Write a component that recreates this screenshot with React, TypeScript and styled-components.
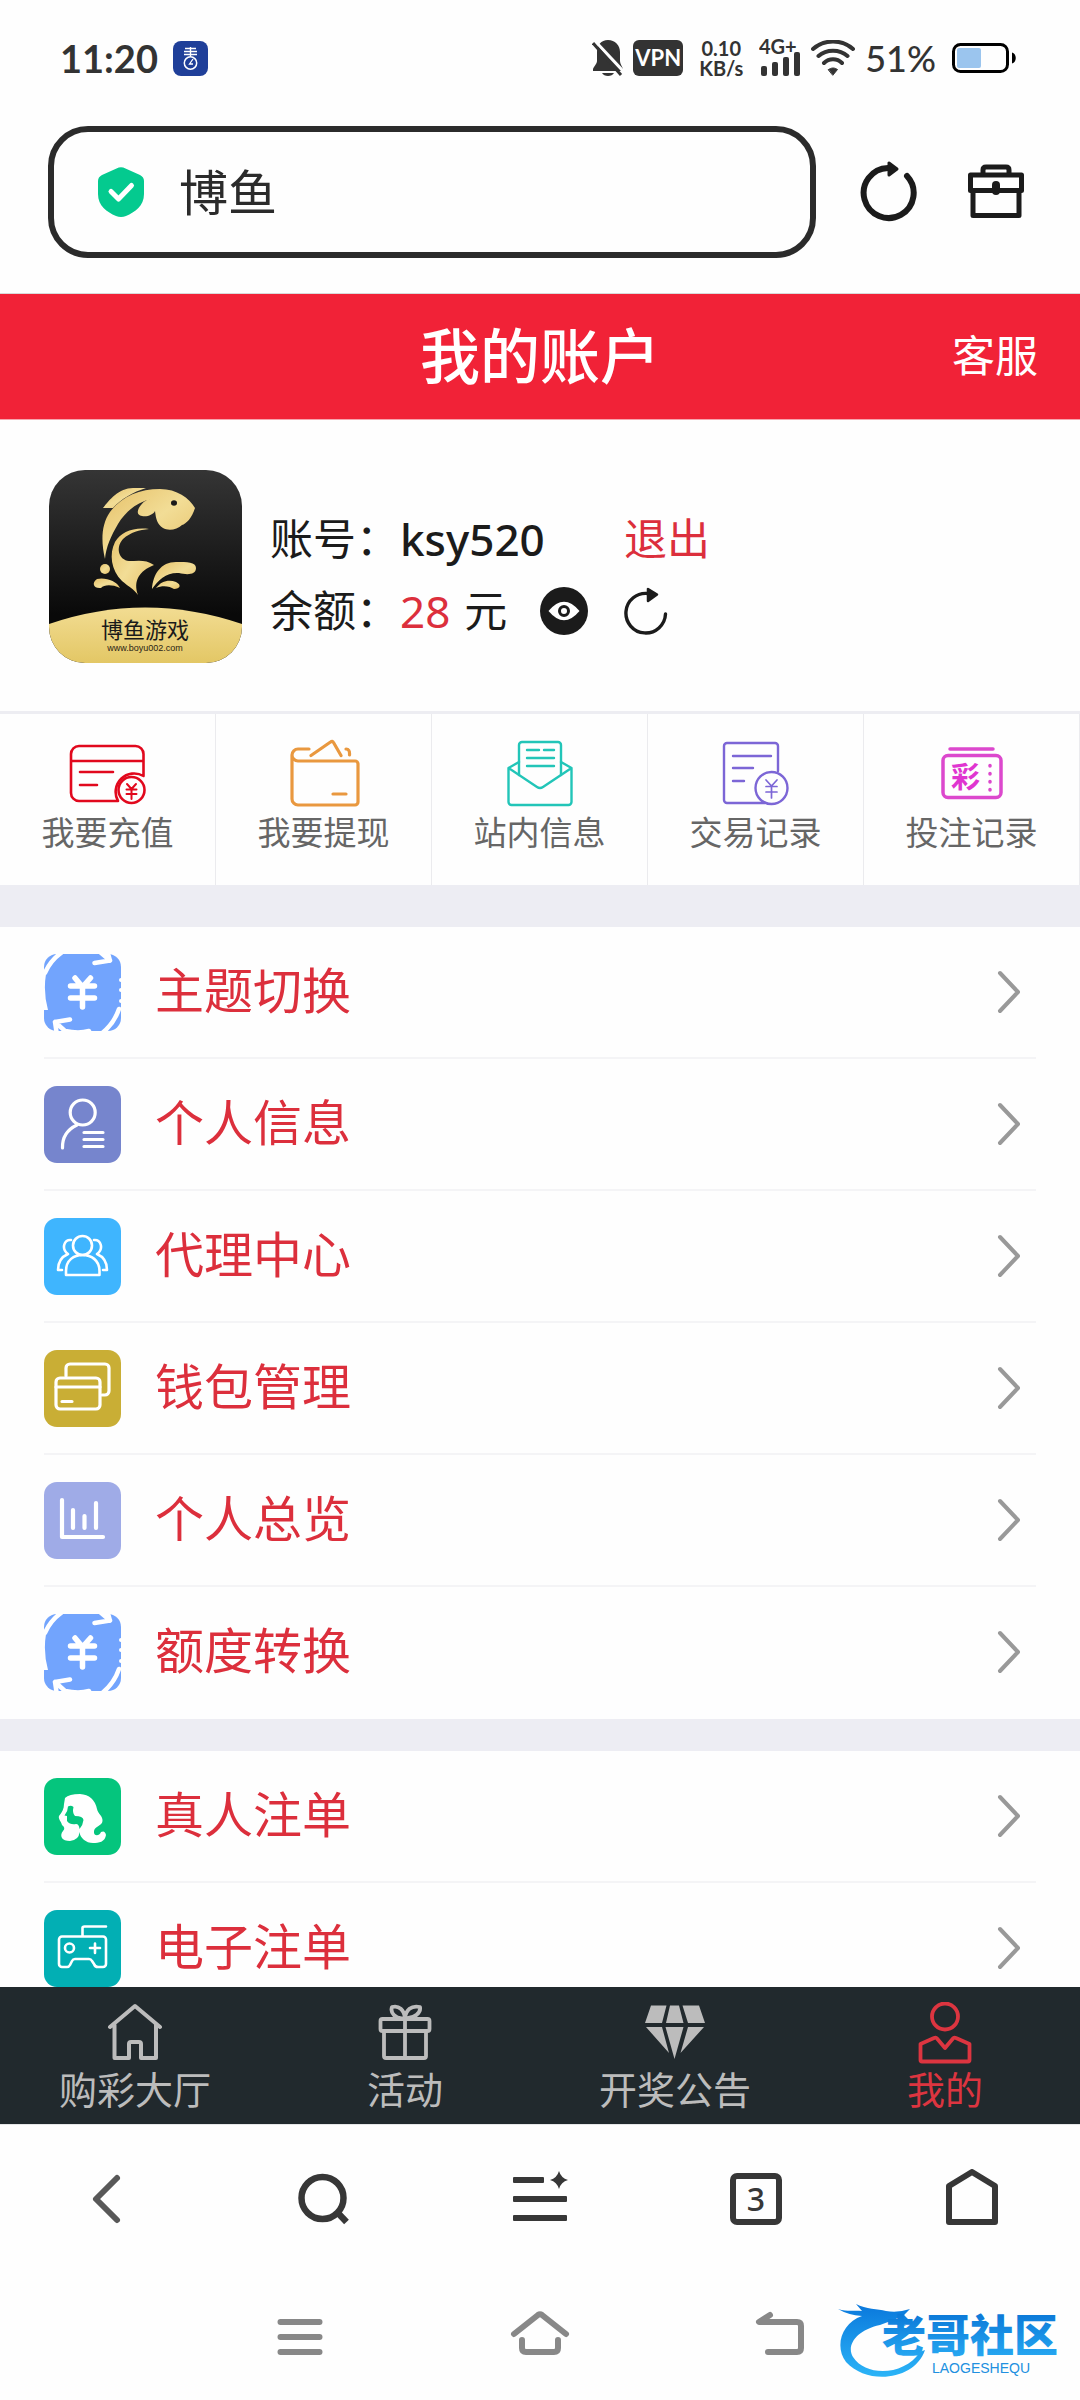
import React from "react";
import styled, { createGlobalStyle } from "styled-components";

const sans = `"Noto Sans", "Noto Sans CJK SC", sans-serif`;
const status = `Lato, "Noto Sans", sans-serif`;
const red = "#dc2f3c";
const ink = "#1b1b1b";

const GlobalStyle = createGlobalStyle`
  *, *::before, *::after { box-sizing: border-box; }
  body { margin: 0; background: #fefefe; font-family: ${sans}; color: ${ink}; }
  button, input { font: inherit; color: inherit; background: none; border: 0; padding: 0; margin: 0; }
  button { cursor: pointer; }
  a { color: inherit; text-decoration: none; }
  ul { list-style: none; margin: 0; padding: 0; }
  h1 { margin: 0; }
  svg { display: block; flex: none; }
`;

const Screen = styled.div`
  display: flex;
  flex-direction: column;
  height: 100vh;
  overflow: hidden;
  background: #fefefe;
`;

/* ---------- status bar ---------- */

const StatusBar = styled.header`
  display: flex;
  align-items: center;
  justify-content: space-between;
  height: 116px;
  padding: 0 64px 0 60px;
  color: #333;
  font-family: ${status};
`;

const StatusGroup = styled.div<{ $gap: number }>`
  display: flex;
  align-items: center;
  gap: ${(p) => p.$gap}px;
`;

const Clock = styled.time`
  font-size: 38px;
  line-height: 48px;
  font-weight: 700;
`;

const VpnTag = styled.span`
  width: 50px;
  height: 36px;
  border-radius: 6px;
  background: #333;
  color: #fff;
  font-size: 22px;
  line-height: 36px;
  font-weight: 700;
  text-align: center;
`;

const Speed = styled.span`
  display: flex;
  flex-direction: column;
  width: 44px;
  font-size: 20px;
  line-height: 20px;
  font-weight: 700;
  text-align: center;
`;

const Percent = styled.span`
  font-size: 36px;
  line-height: 48px;
  font-weight: 500;
`;

/* ---------- browser address row ---------- */

const AddressRow = styled.div`
  display: flex;
  align-items: center;
  gap: 42px;
  padding: 10px 54px 35px 48px;
  border-bottom: 1px solid #d9d9d9;
`;

const AddressBox = styled.label`
  display: flex;
  flex: 1;
  min-width: 0;
  align-items: center;
  gap: 35px;
  height: 132px;
  padding: 0 44px;
  border: 6px solid #2b2b2b;
  border-radius: 40px;
`;

const AddressInput = styled.input`
  flex: 1;
  min-width: 0;
  font-size: 49px;
  line-height: 64px;
  color: #2b2b2b;
  outline: none;
`;

const AddressActions = styled.div`
  display: flex;
  gap: 48px;
`;

const IconButton = styled.button`
  display: flex;
  align-items: center;
  justify-content: center;
`;

/* ---------- page ---------- */

const TitleBar = styled.div`
  display: grid;
  grid-template-columns: 1fr auto 1fr;
  align-items: center;
  flex: none;
  height: 126px;
  padding: 0 42px 2px;
  background: #f12237;
  border-bottom: 1px solid #f6a5ad;
  color: #fff;
`;

const Title = styled.h1`
  grid-column: 2;
  font-size: 60px;
  line-height: 80px;
  font-weight: 500;
`;

const ServiceLink = styled.a`
  justify-self: end;
  font-size: 43px;
  line-height: 60px;
`;

const Content = styled.main`
  flex: 1;
  min-height: 0;
  overflow: hidden;
`;

const Profile = styled.section`
  display: flex;
  align-items: flex-end;
  gap: 28px;
  padding: 50px 49px 48px;
`;

const Account = styled.div`
  display: grid;
  grid-template-columns: 130px 140px 84px auto;
  grid-auto-rows: 72px;
  align-items: center;
  padding-bottom: 16px;
  font-size: 43px;
  line-height: 60px;
`;

const UserName = styled.span`
  grid-column: span 2;
  font-size: 44px;
  font-weight: 500;
`;

const Balance = styled.span`
  display: flex;
  gap: 14px;
`;

const Amount = styled.span`
  font-size: 44px;
  color: ${red};
`;

const LogoutButton = styled.button`
  color: ${red};
  text-align: left;
`;

const QuickGrid = styled.nav`
  display: grid;
  grid-template-columns: repeat(5, 1fr);
  border-top: 3px solid #ededf2;
`;

const QuickLink = styled.a`
  display: flex;
  flex-direction: column;
  align-items: center;
  height: 171px;
  padding-top: 24px;
  border-right: 1px solid #ebebee;
  font-size: 33px;
  line-height: 46px;
  color: #666;
`;

const Spacer = styled.div<{ $size: number }>`
  height: ${(p) => p.$size}px;
  background: #ededf3;
`;

const Menu = styled.ul`
  padding: 0 44px;
`;

const MenuItem = styled.li`
  height: 132px;
  border-bottom: 2px solid #f4f4f6;

  &:last-child {
    border-bottom-color: transparent;
  }
`;

const MenuLink = styled.a`
  display: flex;
  align-items: center;
  gap: 34px;
  height: 100%;
  padding-right: 15px;
`;

const MenuLabel = styled.span`
  flex: 1;
  padding-bottom: 4px;
  font-size: 49px;
  line-height: 64px;
  color: ${red};
`;

const TabBar = styled.nav`
  display: grid;
  grid-template-columns: repeat(4, 1fr);
  flex: none;
  height: 137px;
  background: #21292d;
`;

const Tab = styled.a<{ $active?: boolean }>`
  display: flex;
  flex-direction: column;
  align-items: center;
  padding-top: 15px;
  font-size: 38px;
  line-height: 46px;
  color: ${(p) => (p.$active ? "#dc3540" : "#bcbcbc")};
`;

/* ---------- browser and system bars ---------- */

const BrowserBar = styled.nav`
  display: grid;
  grid-template-columns: repeat(5, 1fr);
  flex: none;
  height: 149px;
  border-top: 1px solid #e4e6e7;
  color: #373737;
`;

const TabCount = styled.span`
  width: 52px;
  height: 52px;
  border: 6px solid #373737;
  border-radius: 7px;
  font-size: 32px;
  line-height: 40px;
  font-weight: 500;
  text-align: center;
`;

const SystemBar = styled.footer`
  position: relative;
  display: grid;
  grid-template-columns: repeat(3, 240px);
  justify-content: center;
  flex: none;
  height: 127px;
  color: #888;
`;

const Watermark = styled.div`
  position: absolute;
  right: 16px;
  bottom: 22px;
  display: flex;
`;

/* ---------- icons ---------- */

type Kids = { children: React.ReactNode };

const Line = ({ w, h, sw, children }: Kids & { w: number; h: number; sw: number }) => (
  <svg width={w} height={h} viewBox={`0 0 ${w} ${h}`} fill="none" stroke="currentColor" strokeWidth={sw} strokeLinecap="round" strokeLinejoin="round" aria-hidden="true">
    {children}
  </svg>
);

const QuickSvg = ({ color, sw, children }: Kids & { color: string; sw: number }) => (
  <svg width="80" height="72" viewBox="0 0 80 72" fill="none" stroke={color} strokeWidth={sw} strokeLinecap="round" strokeLinejoin="round" aria-hidden="true">
    {children}
  </svg>
);

const Tile = ({ bg, sw, children }: Kids & { bg: string; sw: number }) => (
  <svg width="77" height="77" viewBox="0 0 77 77" fill="none" stroke="#fff" strokeWidth={sw} strokeLinecap="round" strokeLinejoin="round" aria-hidden="true">
    <rect width="77" height="77" rx="13" fill={bg} stroke="none" />
    {children}
  </svg>
);

const AppBadge = () => (
  <svg width="35" height="35" viewBox="0 0 35 35" fill="none" stroke="#fff" aria-hidden="true">
    <rect width="35" height="35" rx="8" fill="#1f3f99" stroke="none" />
    <path d="M12 7.500h11M11 10.500h13M11 13.500h13M17.500 6v9" strokeWidth="1.400" />
    <circle cx="17.500" cy="22" r="6.200" strokeWidth="1.500" />
    <path d="M20 18l-3.500 5h3.500" strokeWidth="1.300" />
  </svg>
);

const BellOff = () => (
  <svg width="32" height="36" viewBox="0 0 32 36" aria-hidden="true">
    <path d="M16 0C9 0 5 5 5 12v9c0 3-3 5-4 8v2h30v-2c-1-3-3-5-3-8v-9C28 5 23 0 16 0Z" fill="#333" />
    <path d="M10 33h12c-2 4-10 4-12 0Z" fill="#333" />
    <path d="M3 1 31 31" stroke="#fefefe" strokeWidth="3" />
    <path d="M1 3 29 35" stroke="#333" strokeWidth="3" />
    <path d="M0 7V18L5 12Z" fill="#fefefe" />
  </svg>
);

const Signal = () => (
  <svg width="42" height="52" viewBox="0 -8 42 52" fill="#333" aria-hidden="true">
    <text x="0" y="14" fontFamily="Lato" fontWeight="700" fontSize="20">4G+</text>
    <rect x="2" y="26" width="6" height="10" rx="2" />
    <rect x="13" y="22" width="6" height="14" rx="2" />
    <rect x="24" y="17" width="6" height="19" rx="2" />
    <rect x="35" y="12" width="6" height="24" rx="2" />
  </svg>
);

const Wifi = () => (
  <svg width="44" height="36" viewBox="0 0 44 36" fill="none" stroke="#333" strokeWidth="4" strokeLinecap="round" aria-hidden="true">
    <path d="M2 9C13-1 31-1 42 9M7.500 16c8-7 21-7 29 0M13 23c5-5 13-5 18 0" />
    <path d="M17.500 29.500c3-2 6-2 9 0L22 35Z" fill="#333" strokeWidth="1" strokeLinejoin="round" />
  </svg>
);

const Battery = () => (
  <svg width="64" height="30" viewBox="0 0 64 30" aria-hidden="true">
    <rect x="1.500" y="1.500" width="54" height="27" rx="7" fill="none" stroke="#000" strokeWidth="3" />
    <rect x="5" y="5" width="24" height="20" rx="2" fill="#9bc5ee" />
    <path d="M60 9.500c5 1 5 10 0 11Z" fill="#000" />
  </svg>
);

const Shield = () => (
  <svg width="46" height="50" viewBox="0 0 46 50" aria-hidden="true">
    <path d="M18.500 1.500q4.500-2.500 9 0L42 8q4 2 4 6v13c0 12-9 18-18 22q-5 2-10 0C9 45 0 39 0 27V14q0-4 4-6Z" fill="#04ca8f" />
    <path d="M13 24.500 20.500 32 33.500 18.500" fill="none" stroke="#fff" strokeWidth="5" strokeLinecap="round" strokeLinejoin="round" />
  </svg>
);

const Reload = () => (
  <svg width="60" height="64" viewBox="0 2 60 64" fill="none" stroke="#1b1b1b" strokeWidth="6" strokeLinecap="round" aria-hidden="true">
    <path d="M49 18A25 25 0 1 1 30 10" />
    <path d="M31 5v12l8-6Z" fill="#1b1b1b" strokeWidth="3" strokeLinejoin="round" />
  </svg>
);

const Briefcase = () => (
  <Line w={60} h={64} sw={5}>
    <path d="M17 13v-3q0-3 3-3h20q3 0 3 3v3" />
    <path d="M4.500 15h51v15.500h-51ZM7 31v24.500h46V31" />
    <path d="M30 25v6" strokeWidth="8" />
  </Line>
);

const Logo = () => (
  <svg width="193" height="193" viewBox="0 0 193 193" role="img" aria-label="博鱼游戏">
    <defs>
      <linearGradient id="night" x1="0" y1="0" x2="0" y2="1">
        <stop offset="0" stopColor="#353535" />
        <stop offset="0.750" stopColor="#090909" />
      </linearGradient>
      <linearGradient id="gold" x1="0" y1="0" x2="1" y2="1">
        <stop offset="0" stopColor="#e6c068" />
        <stop offset="0.500" stopColor="#f2dd96" />
        <stop offset="1" stopColor="#e6c068" />
      </linearGradient>
      <linearGradient id="sand" x1="0" y1="0" x2="0" y2="1">
        <stop offset="0" stopColor="#f2dc92" />
        <stop offset="1" stopColor="#e3c765" />
      </linearGradient>
      <clipPath id="tile"><rect width="193" height="193" rx="36" /></clipPath>
    </defs>
    <g clipPath="url(#tile)">
      <rect width="193" height="193" fill="url(#night)" />
      <path d="M0 154Q96 121 193 154V193H0Z" fill="url(#sand)" />
      <g fill="url(#gold)">
        <path d="M54 38C60 30 70 18 84 18H97C84 22 72 29 64 38Z" />
        <path d="M56 89C52 72 52 55 61 42C72 27 90 19 111 19C128 19 140 28 146 38C143 48 137 54 133 55C128 60 119 61 114 58C108 54 107 49 106 41C104 45 98 47 93 46C87 45 88 40 92 35C95 31 98 30 102 29C88 32 76 42 69 54C62 66 57 77 56 89Z" />
        <path d="M100 59C84 57 72 62 66 72C60 84 62 100 73 111C80 117 85 119 89 125C84 111 90 101 105 95C97 89 88 91 80 91C70 90 66 78 74 69C82 62 90 60 100 59Z" />
        <path d="M103 119C104 104 112 92 127 92C138 92 147 92 147 98C147 105 138 105 130 103C118 102 109 110 103 119Z" />
        <path d="M107 118C112 111 120 109 127 112C133 115 131 119 125 119C121 116 113 115 107 118Z" />
        <path d="M71 118C68 111 56 107 48 109C42 113 45 119 52 118C55 115 62 114 71 118Z" />
        <circle cx="56" cy="99" r="5" />
      </g>
      <ellipse cx="125" cy="33" rx="3" ry="2.800" fill="#1a1a1a" />
      <text x="96" y="168" textAnchor="middle" fontFamily="Noto Sans CJK SC" fontSize="22" fill="#1a1a1a">博鱼游戏</text>
      <text x="96" y="181" textAnchor="middle" fontFamily="Liberation Sans" fontSize="9" fill="#2a2415">www.boyu002.com</text>
    </g>
  </svg>
);

const Eye = () => (
  <svg width="48" height="48" viewBox="0 0 48 48" aria-hidden="true">
    <circle cx="24" cy="24" r="24" fill="#1b1b1b" />
    <path d="M8.500 24Q24 5.500 39.500 24Q24 42.500 8.500 24Z" fill="#fff" />
    <circle cx="24" cy="24" r="4.500" fill="none" stroke="#1b1b1b" strokeWidth="3" />
  </svg>
);

const SmallReload = () => (
  <svg width="44" height="48" viewBox="0 0 44 48" fill="none" stroke="#1b1b1b" strokeWidth="3.400" strokeLinecap="round" strokeLinejoin="round" aria-hidden="true">
    <path d="M41.500 27A19.800 19.800 0 1 1 24 6.500" />
    <path d="M24 2v12l9-6.500Z" fill="#1b1b1b" strokeWidth="2.500" />
  </svg>
);

const DepositIcon = () => (
  <QuickSvg color="#e1081d" sw={2.6}>
    <path d="M75.500 38V16a8 8 0 0 0-8-8H11a8 8 0 0 0-8 8v39a8 8 0 0 0 8 8h39A18.500 18.500 0 0 1 75.500 38ZM3 23h72.500" />
    <path d="M12 34h33M12 47h17" />
    <circle cx="63.500" cy="52" r="13" />
    <path d="M59 46l4.500 5 4.500-5M63.500 51v10M58.500 51.500h10M58.500 56h10" strokeWidth="2" />
  </QuickSvg>
);

const WithdrawIcon = () => (
  <QuickSvg color="#e9983f" sw={3.2}>
    <path d="M25 11H14a6 6 0 0 0 0 12h57a3 3 0 0 1 3 3v38a3 3 0 0 1-3 3H14a6 6 0 0 1-6-6V17" />
    <path d="M27 17.500 46.500 4q2-1.500 3 .500l7.500 13M62 11q4 0 3.500 6M49 56h13" />
  </QuickSvg>
);

const InboxIcon = () => (
  <QuickSvg color="#22c5b8" sw={2.4}>
    <path d="M19 37V7a3 3 0 0 1 3-3h36a3 3 0 0 1 3 3v30" />
    <path d="M19 24 8.500 30v34a3 3 0 0 0 3 3h57a3 3 0 0 0 3-3V30L61 24M8.500 30 37 49q3 2 6 0L71.500 30" />
    <path d="M27 12h12M44 12h10M27 20h27M27 28h27" />
  </QuickSvg>
);

const RecordIcon = () => (
  <QuickSvg color="#7c66d6" sw={2.4}>
    <path d="M62 33V8a3 3 0 0 0-3-3H11a3 3 0 0 0-3 3v54a3 3 0 0 0 3 3h38M17 18h38M17 30h20M17 43h11" />
    <circle cx="55.500" cy="50" r="16" />
    <path d="M50 42l5.500 6 5.500-6M55.500 48v12M50 48.500h11M50 54h11" strokeWidth="1.700" />
  </QuickSvg>
);

const BetIcon = () => (
  <QuickSvg color="#dc48cd" sw={3.5}>
    <path d="M18 11h43" />
    <rect x="11" y="17.500" width="58" height="42" rx="5" />
    <path d="M58 27.500v.500M58 35.500v.500M58 43.500v.500M58 51.500v.500" />
    <text x="33.500" y="50" textAnchor="middle" fontFamily="Noto Sans CJK SC" fontWeight="700" fontSize="29" fill="#e035d0" stroke="none">彩</text>
  </QuickSvg>
);

const SwitchTile = () => (
  <Tile bg="#72a4fd" sw={5}>
    <path d="M1 19Q6 7 17-1M75 55Q70 70 57 80" strokeWidth="4.500" />
    <path d="M50.500 9 66 6.500 63-4M56-2l10 8.500M26 65.500 11 68l2 13M11 68l10 9q14 3 24 0" strokeWidth="4.500" />
    <path d="M0 20H2Q-1 38 4 56H0Z" fill="#fff" stroke="none" />
    <path d="M77 26v.100M77 36v.100M77 47v.100" strokeWidth="4" />
    <path d="M31 24l7.500 9L46.500 24M38.500 33v20M26.500 32h24M26.500 44h24" strokeWidth="5.500" />
  </Tile>
);

const PersonTile = () => (
  <Tile bg="#7685cd" sw={3.2}>
    <circle cx="38.700" cy="26.500" r="12.500" />
    <path d="M33 39Q18 46 18.500 62M40 46.500h19M40 53.500h19M40 60.500h19" />
  </Tile>
);

const AgentTile = () => (
  <Tile bg="#3fb5fe" sw={2.6}>
    <circle cx="38.500" cy="27.500" r="9.500" />
    <path d="M22 57v-4c0-11 8-16 16.500-16S55.500 42 55.500 53v4ZM27 22c-7-1-10 9-3 14-7 3-10 8-10 16h4M50 22c7-1 10 9 3 14 7 3 10 8 10 16h-4" />
  </Tile>
);

const CardsTile = () => (
  <Tile bg="#c9ae35" sw={3.2}>
    <path d="M22 26V18a4 4 0 0 1 4-4h35a4 4 0 0 1 4 4v23a4 4 0 0 1-4 4h-3" />
    <rect x="12" y="28" width="44" height="31" rx="4" />
    <path d="M12 37h44M18 51.500h10" />
  </Tile>
);

const ChartTile = () => (
  <Tile bg="#9fabe7" sw={4.2}>
    <path d="M18 18v37h41M29 28v18M40.500 34v12M52 21v25" />
  </Tile>
);

const LadyTile = () => (
  <Tile bg="#05c57d" sw={2}>
    <path stroke="none" fill="#fff" d="M21 20Q25 16 36 16Q50 17 53 31C54 36 59 38 58.500 43C58 48 51 48 50 53C49 58 55 59 57 54Q61 52 62 57C61 64 55 65 49 65C42 65 36 60 35.500 54Q35 62 26 63C18 63 15 58 19 53Q22 50 18 47C17 43 14 41 15 38C18 34 20 31 20 26Z" />
    <path stroke="none" fill="#05c57d" d="M24 28.500Q27 27 29.500 29Q28 35 31 38Q39 38 39.500 42Q39 47 35.500 51Q35 46 32 46Q26 47 23 43V38L20.500 37.500Q24 33 24 28.500Z" />
  </Tile>
);

const GameTile = () => (
  <Tile bg="#02afb4" sw={2.6}>
    <path d="M38.500 26v-8q0-1.500 2-1.500H62M18 26.500h41a3 3 0 0 1 3 3V54a3 3 0 0 1-3 3h-5q-3 0-4-3l-2-3q-1-2-3-2H31q-2 0-3 2l-2 4q-1 2-3 2h-5a3 3 0 0 1-3-3V29.500a3 3 0 0 1 3-3Z" />
    <circle cx="25.500" cy="38" r="4.500" />
    <path d="M51 33.500v9.500M46 38h10" />
  </Tile>
);

const Chevron = () => (
  <svg width="24" height="44" viewBox="0 0 24 44" fill="none" stroke="#999" strokeWidth="4" strokeLinecap="round" strokeLinejoin="round" aria-hidden="true">
    <path d="M3 3 21 22 3 41" />
  </svg>
);

const HallIcon = () => (
  <Line w={60} h={64} sw={4}>
    <path d="M5 25 30 4 55 25M9.500 23v33H24V42q0-2 2-2h8q2 0 2 2v14h15V23" />
  </Line>
);

const GiftIcon = () => (
  <Line w={60} h={64} sw={3.8}>
    <rect x="5.500" y="17" width="49" height="12" rx="2" />
    <path d="M9 29v25q0 2 2 2h38q2 0 2-2V29M30 17v39M30 16C20 18 15 10 17 5C24 3 29 8 30 16C31 8 36 3 45 5C46 10 40 17 30 16" />
  </Line>
);

const DiamondIcon = () => (
  <svg width="60" height="64" viewBox="0 0 60 64" fill="currentColor" aria-hidden="true">
    <path d="M6 3.500h15.500L17 21H0ZM25 3.500h9L38.500 21H21ZM37.500 3.500H54L60 21H43ZM1 25h16l7 26ZM20.500 25h18L29.500 57ZM43 25h16L35.500 51Z" />
  </svg>
);

const MineIcon = () => (
  <Line w={60} h={64} sw={3.8}>
    <circle cx="30" cy="14.500" r="13" />
    <path d="M5.500 58V42L19 36q2-1 3 .500L30 46l8-9.500q1-1.500 3-.500l13.500 6v16q0 1.500-1.500 1.500H7q-1.500 0-1.500-1.500Z" />
  </Line>
);

const Dragon = () => (
  <svg width="226" height="76" viewBox="0 0 226 76" role="img" aria-label="老哥社区 LAOGESHEQU">
    <defs>
      <linearGradient id="sea" x1="0" y1="0" x2="0" y2="1">
        <stop offset="0" stopColor="#0a78dc" />
        <stop offset="1" stopColor="#2bb4f7" />
      </linearGradient>
      <linearGradient id="seaText" x1="0" y1="0" x2="0" y2="1">
        <stop offset="0.200" stopColor="#0c79d8" />
        <stop offset="1" stopColor="#2bb0f6" />
      </linearGradient>
    </defs>
    <path fill="url(#sea)" d="M0 7C10 10 16 8 24 9L18 2C28 7 40 7 48 9Q60 11 72 7L66 13L71 18L58 16L68 24L50 20L42 23C18 28 8 44 15 55C28 75 66 74 82 50L87 48C77 78 30 84 8 60C-4 44 4 21 24 14Q10 13 0 7Z" />
    <text x="44" y="50" fontFamily="Noto Sans CJK SC" fontWeight="900" fontSize="44" fill="url(#seaText)">老哥社区</text>
    <text x="94" y="71" fontFamily="Liberation Sans" fontSize="14" fill="#2190e0">LAOGESHEQU</text>
  </svg>
);

/* ---------- data ---------- */

const quickLinks = [
  { label: "我要充值", icon: <DepositIcon /> },
  { label: "我要提现", icon: <WithdrawIcon /> },
  { label: "站内信息", icon: <InboxIcon /> },
  { label: "交易记录", icon: <RecordIcon /> },
  { label: "投注记录", icon: <BetIcon /> },
];

const accountMenu = [
  { label: "主题切换", icon: <SwitchTile /> },
  { label: "个人信息", icon: <PersonTile /> },
  { label: "代理中心", icon: <AgentTile /> },
  { label: "钱包管理", icon: <CardsTile /> },
  { label: "个人总览", icon: <ChartTile /> },
  { label: "额度转换", icon: <SwitchTile /> },
];

const betMenu = [
  { label: "真人注单", icon: <LadyTile /> },
  { label: "电子注单", icon: <GameTile /> },
];

const tabs = [
  { label: "购彩大厅", icon: <HallIcon /> },
  { label: "活动", icon: <GiftIcon /> },
  { label: "开奖公告", icon: <DiamondIcon /> },
  { label: "我的", icon: <MineIcon />, active: true },
];

const MenuList = ({ items }: { items: { label: string; icon: React.ReactNode }[] }) => (
  <Menu>
    {items.map((item) => (
      <MenuItem key={item.label}>
        <MenuLink href="#">
          {item.icon}
          <MenuLabel>{item.label}</MenuLabel>
          <Chevron />
        </MenuLink>
      </MenuItem>
    ))}
  </Menu>
);

export default function App() {
  return (
    <Screen>
      <GlobalStyle />
      <StatusBar>
        <StatusGroup $gap={15}>
          <Clock>11:20</Clock>
          <AppBadge />
        </StatusGroup>
        <StatusGroup $gap={16}>
          <StatusGroup $gap={9}>
            <BellOff />
            <VpnTag>VPN</VpnTag>
          </StatusGroup>
          <Speed>
            <span>0.10</span>
            <span>KB/s</span>
          </Speed>
          <StatusGroup $gap={10}>
            <Signal />
            <Wifi />
            <Percent>51%</Percent>
          </StatusGroup>
          <Battery />
        </StatusGroup>
      </StatusBar>

      <AddressRow>
        <AddressBox>
          <Shield />
          <AddressInput type="text" defaultValue="博鱼" aria-label="地址" />
        </AddressBox>
        <AddressActions>
          <IconButton type="button" aria-label="刷新"><Reload /></IconButton>
          <IconButton type="button" aria-label="工具箱"><Briefcase /></IconButton>
        </AddressActions>
      </AddressRow>

      <TitleBar>
        <Title>我的账户</Title>
        <ServiceLink href="#">客服</ServiceLink>
      </TitleBar>

      <Content>
        <Profile>
          <Logo />
          <Account>
            <span>账号：</span>
            <UserName>ksy520</UserName>
            <LogoutButton type="button">退出</LogoutButton>
            <span>余额：</span>
            <Balance><Amount>28</Amount>元</Balance>
            <div><IconButton type="button" aria-label="显示余额"><Eye /></IconButton></div>
            <div><IconButton type="button" aria-label="刷新余额"><SmallReload /></IconButton></div>
          </Account>
        </Profile>
        <QuickGrid>
          {quickLinks.map((q) => (
            <QuickLink key={q.label} href="#">
              {q.icon}
              {q.label}
            </QuickLink>
          ))}
        </QuickGrid>
        <Spacer $size={42} />
        <MenuList items={accountMenu} />
        <Spacer $size={32} />
        <MenuList items={betMenu} />
      </Content>

      <TabBar>
        {tabs.map((t) => (
          <Tab key={t.label} href="#" $active={t.active}>
            {t.icon}
            {t.label}
          </Tab>
        ))}
      </TabBar>

      <BrowserBar>
        <IconButton type="button" aria-label="后退">
          <svg width="60" height="60" viewBox="0 0 60 60" fill="none" stroke="#585858" strokeWidth="6" strokeLinecap="round" strokeLinejoin="round"><path d="M39 9 18 30 39 51" /></svg>
        </IconButton>
        <IconButton type="button" aria-label="搜索">
          <svg width="60" height="60" viewBox="0 0 60 60" fill="none" stroke="currentColor" strokeWidth="6.500"><circle cx="28.500" cy="29" r="21" /><path d="M43 43l9.500 10" /></svg>
        </IconButton>
        <IconButton type="button" aria-label="菜单">
          <svg width="60" height="60" viewBox="0 0 60 60" fill="currentColor"><rect x="3" y="8" width="31" height="6" rx="1" /><rect x="3" y="27" width="54" height="6" rx="1" /><rect x="3" y="46" width="54" height="6" rx="1" /><path d="M49 2q2 7 9 9-7 2-9 9-2-7-9-9 7-2 9-9Z" /></svg>
        </IconButton>
        <IconButton type="button" aria-label="标签页"><TabCount>3</TabCount></IconButton>
        <IconButton type="button" aria-label="主页">
          <Line w={60} h={60} sw={6}><path d="M30 3 53 17V53H7V17Z" /></Line>
        </IconButton>
      </BrowserBar>

      <SystemBar>
        <IconButton type="button" aria-label="最近任务">
          <Line w={60} h={60} sw={6}><path d="M10.500 15h39M10.500 30h39M10.500 45h39" /></Line>
        </IconButton>
        <IconButton type="button" aria-label="桌面">
          <Line w={60} h={60} sw={6}><path d="M4 27 28 8q2-1.500 4 0L56 27M12 33v8q0 4 4 4h28q4 0 4-4v-8" /></Line>
        </IconButton>
        <IconButton type="button" aria-label="返回">
          <Line w={60} h={60} sw={6}><path d="M20 8 9 15H47q4 0 4 4v22q0 4-4 4H18" /></Line>
        </IconButton>
        <Watermark><Dragon /></Watermark>
      </SystemBar>
    </Screen>
  );
}
